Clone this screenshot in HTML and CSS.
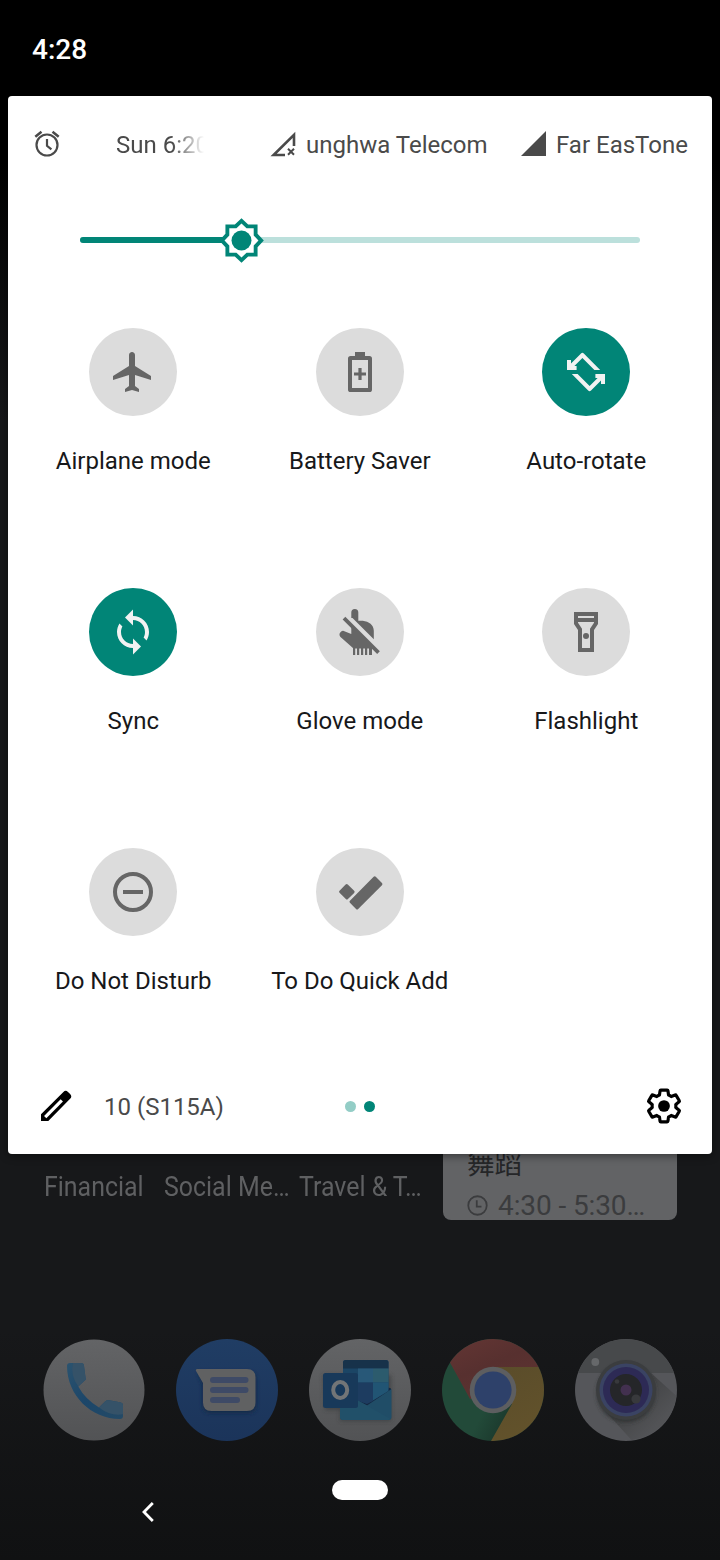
FILE: index.html
```html
<!DOCTYPE html>
<html lang="en">
<head>
<meta charset="utf-8">
<title>Quick settings</title>
<link rel="stylesheet" href="styles.css">
</head>
<body>
<div class="screen">
  <header class="statusbar">4:28</header>

  <main class="panel">
    <div class="info">
      <svg class="alarm" viewBox="0 0 26 28"><g fill="none" stroke="#4a4a4a"><circle cx="13" cy="15" r="10.5" stroke-width="2.2"/><path d="M13 9v6.8l4.4 3.6" stroke-width="2.2"/><path d="M1.3 6.8l6.2-5M18.5 1.8l6.2 5" stroke-width="2.5"/></g></svg>
      <span class="alarm-time">Sun 6:20</span>
      <svg class="signal" viewBox="0 0 26 26"><path d="M24 15V3.800L3.600 24H15" fill="none" stroke="#4a4a4a" stroke-width="2.600"/><path d="M18 17.700l6 6M24 17.700l-6 6" stroke="#4a4a4a" stroke-width="2"/></svg>
      <span class="carrier carrier-a">unghwa Telecom</span>
      <svg class="signal signal-b" viewBox="0 0 26 26"><path d="M25 0v25H0z" fill="#4a4a4a"/></svg>
      <span class="carrier carrier-b">Far EasTone</span>
    </div>

    <div class="brightness">
      <div class="track"><div class="fill"></div></div>
      <svg class="thumb" viewBox="0 0 24 24"><path fill="#018577" d="M20.2 8.6V3.8h-4.8L12 .6 8.6 3.8H3.8v4.8L.6 12l3.2 3.4v4.8h4.8l3.4 3.2 3.4-3.2h4.8v-4.8l3.2-3.4z"/><path transform="translate(2.88 2.88) scale(.76)" fill="#fff" d="M20.2 8.6V3.8h-4.8L12 .6 8.6 3.8H3.8v4.8L.6 12l3.2 3.4v4.8h4.8l3.4 3.2 3.4-3.2h4.8v-4.8l3.2-3.4z"/><circle cx="12" cy="12" r="5.1" fill="#018577"/></svg>
    </div>

    <div class="tiles">
      <div class="tile"><div class="disc"><svg viewBox="0 0 24 24"><path fill="currentColor" d="M21 16v-2l-8-5V3.5C13 2.67 12.33 2 11.5 2S10 2.67 10 3.5V9l-8 5v2l8-2.500V19l-2 1.500V22l3.500-1 3.500 1v-1.500L13 19v-5.500z"/></svg></div><span>Airplane mode</span></div>
      <div class="tile"><div class="disc"><svg viewBox="0 0 24 24"><path fill="currentColor" d="M9.5 2h5v3h-5zM9 12.2h2.200V10h1.600v2.200H15v1.600h-2.200V16h-1.600v-2.200H9z"/><rect x="7" y="5" width="10" height="16" rx=".3" fill="none" stroke="currentColor" stroke-width="2" stroke-linejoin="round"/></svg></div><span>Battery Saver</span></div>
      <div class="tile on"><div class="disc"><svg viewBox="0 0 24 24"><path fill="currentColor" d="M16.200 11l-6-6-4 4h1.100v2H2.500V6h2v1.700l5-5q.7-.7 1.400 0l8.200 8.300zM7.800 13l6 6 4-4h-1.100v-2h4.800v5h-2v-1.700l-5 5q-.7.7-1.400 0L4.900 13z"/></svg></div><span>Auto-rotate</span></div>
      <div class="tile on"><div class="disc"><svg viewBox="0 0 24 24"><path fill="currentColor" d="M12 4V.7L8 4.7l4 4V6c3.31 0 6 2.69 6 6 0 1.01-.25 1.97-.7 2.8l1.46 1.46C19.54 15.03 20 13.57 20 12c0-4.42-3.58-8-8-8zm0 14c-3.31 0-6-2.69-6-6 0-1.01.25-1.97.7-2.8L5.24 7.74C4.46 8.97 4 10.43 4 12c0 4.42 3.58 8 8 8v3.3l4-4-4-4z"/></svg></div><span>Sync</span></div>
      <div class="tile"><div class="disc"><svg class="full" viewBox="0 0 88 88"><path fill="currentColor" d="M35.3 24.500a3.500 3.500 0 0 1 7 0v8.200h4.500c6 .8 11 4 11 10v8.500L36.500 30h-1.200zM35.3 37L56 57.500V60.500H37.500L24.500 49c-2-2.400-.7-5.500 2.600-6.200l8.200 3.300z"/><path fill="currentColor" d="M37 60h2.200v7H37zM41 60h2.200v7H41zM45 60h2.200v7H45zM49 60h2.200v7H49zM53 60h3v7h-3z"/><path stroke="#dcdcdc" stroke-width="3" d="M30.500 27.200l33 34"/><path stroke="currentColor" stroke-width="3.800" d="M28 30.200l34.500 34.500"/></svg></div><span>Glove mode</span></div>
      <div class="tile"><div class="disc"><svg viewBox="0 0 24 24"><path fill="currentColor" fill-rule="evenodd" d="M6 2h12v6l-2 3v11H8V11L6 8zM8 4v1h8V4zM8 7v.4l2 3V20h4v-9.600l2-3V7z"/><circle cx="12" cy="14" r="1.5" fill="currentColor"/></svg></div><span>Flashlight</span></div>
      <div class="tile"><div class="disc"><svg viewBox="0 0 24 24"><circle cx="12" cy="12" r="9" fill="none" stroke="currentColor" stroke-width="2"/><path fill="currentColor" d="M7 11h10v2H7z"/></svg></div><span>Do Not Disturb</span></div>
      <div class="tile"><div class="disc"><svg class="full" viewBox="0 0 88 88"><g fill="currentColor" stroke="currentColor" stroke-width="3" stroke-linejoin="round"><path d="M30.700 37.500l6.400 6.400-6.200 6.100-6.300-6.300zM58.700 29.900l6.200 6.200L41.100 59.900 35 53.700z"/></g></svg></div><span>To Do Quick Add</span></div>
    </div>

    <footer class="panel-foot">
      <svg class="edit" viewBox="0 0 32 32"><path d="M1 31v-6.800L23.400 2a3.200 3.200 0 0 1 4.600 0l2.100 2.100a3.200 3.200 0 0 1 0 4.600L8.300 31z"/><path d="M5.200 27.100L21.800 10.400" stroke="#fff" stroke-width="3.200"/></svg>
      <span class="build">10 (S115A)</span>
      <span class="dots"><i></i><i class="current"></i></span>
      <svg class="gear" viewBox="0 0 24 24"><path fill="none" stroke="#000" stroke-width="2" stroke-linejoin="round" d="M19.43 12.98c.04-.32.07-.64.07-.98s-.03-.66-.07-.98l2.11-1.65c.19-.15.24-.42.12-.64l-2-3.46c-.12-.22-.39-.3-.61-.22l-2.49 1c-.52-.4-1.08-.73-1.69-.98l-.38-2.65C14.46 2.18 14.25 2 14 2h-4c-.25 0-.46.18-.49.42l-.38 2.65c-.61.25-1.17.59-1.69.98l-2.49-1c-.23-.09-.49 0-.61.22l-2 3.46c-.13.22-.07.49.12.64l2.11 1.65c-.04.32-.07.65-.07.98s.03.66.07.98l-2.11 1.65c-.19.15-.24.42-.12.64l2 3.46c.12.22.39.3.61.22l2.49-1c.52.4 1.08.73 1.69.98l.38 2.65c.03.24.24.42.49.42h4c.25 0 .46-.18.49-.42l.38-2.65c.61-.25 1.17-.59 1.69-.98l2.49 1c.23.09.49 0 .61-.22l2-3.46c.12-.22.07-.49-.12-.64z"/><circle cx="12" cy="12" r="3.700"/></svg>
    </footer>
  </main>

  <section class="home">
    <div class="folders"><span>Financial</span><span>Social Me…</span><span>Travel &amp; T…</span></div>
    <div class="event">
      <div class="event-title">舞蹈</div>
      <div class="event-time"><svg viewBox="0 0 20 20"><g fill="none" stroke="#3b3c3e" stroke-width="1.700"><circle cx="10" cy="10" r="8.800"/><path d="M9.300 5v6h4.500"/></g></svg><span>4:30 - 5:30…</span></div>
    </div>
  </section>

  <nav class="dock">
    <svg viewBox="0 0 102 102">
      <defs>
        <linearGradient id="plate" x2="0" y2="1"><stop stop-color="#636466"/><stop offset="1" stop-color="#525355"/></linearGradient>
        <linearGradient id="phone" x2="1" y2="1"><stop stop-color="#2b536f"/><stop offset=".5" stop-color="#1c4669"/><stop offset="1" stop-color="#244a66"/></linearGradient>
      </defs>
      <circle cx="51" cy="51" r="50.5" fill="url(#plate)"/>
      <path fill="url(#phone)" d="M24 27q0-3 3-3h11q3 0 3 3l1.800 13.500-7.500 7Q42 60 56 68.500l6-6q1.500-1.500 4-1.200l11 2q3 .5 3 3V77q0 3-3 3C48 80 24 56 24 27z"/>
      <path fill="#355268" d="M30 24h8q3 0 3 3l1.800 13.500-7.500 7Q27 36 30 24zM56 68.500l6-6q1.500-1.500 4-1.200l11 2q3 .5 3 3v9q-13 2-24-6.800z"/>
    </svg>
    <svg viewBox="0 0 102 102">
      <defs><linearGradient id="msg" x2="0" y2="1"><stop stop-color="#203d64"/><stop offset="1" stop-color="#1b345a"/></linearGradient><filter id="soft" x="-20%" y="-20%" width="140%" height="150%"><feGaussianBlur stdDeviation="2"/></filter></defs>
      <circle cx="51" cy="51" r="51" fill="url(#msg)"/>
      <path fill="#182b47" filter="url(#soft)" d="M22 33h50q8 0 8 8v25q0 8-8 8H35q-8 0-8-8V46z"/>
      <path fill="#606162" d="M21.500 30H71q8.500 0 8.500 8.500V63.500q0 8.500-8.500 8.500H35.500q-8.500 0-8.500-8.500V44l-7-12q-.8-2 1.500-2z"/>
      <path stroke="#3e4a66" stroke-width="6" stroke-linecap="round" d="M37 41h32.500M37 51h32.500M37 61h24"/>
    </svg>
    <svg viewBox="0 0 102 102">
      <circle cx="51" cy="51" r="51" fill="url(#plate)"/>
      <path fill="#333639" filter="url(#soft)" opacity=".6" d="M14 36h68v46H31V71H16z"/>
      <path d="M34 23.500q0-2.500 2.500-2.500h40.500q2.500 0 2.500 2.500V58H34z" fill="#1b4565"/>
      <path d="M34 29.500v-6q0-2.500 2.500-2.500h40.500q2.500 0 2.500 2.500v6z" fill="#17324a"/>
      <path d="M49 29.500h15v14H49z" fill="#285878"/><path d="M64 29.500h15.500v14H64z" fill="#2c5b6d"/>
      <path d="M79.500 48.500l2.500 1V53L58 67l-9-5 9-4 21-7z" fill="#152943"/>
      <path d="M49 43.500h15V62l-6 3-9-3z" fill="#1d3c60"/><path d="M64 43.500h15.500V52L64 61.500z" fill="#215574"/>
      <path d="M31 60h15l12 6.500L82.500 50v28q0 3-3 3H34q-3 0-3-3z" fill="#204d67"/>
      <path d="M46 60l12 6.500 23.500 13.500q-1 1-3 1H34q-3 0-3-3V62z" fill="#215069"/>
      <rect x="14" y="34" width="35" height="35" rx="2.500" fill="#18395a"/>
      <ellipse cx="31.200" cy="51" rx="7" ry="8" fill="none" stroke="#727577" stroke-width="4"/>
    </svg>
    <svg viewBox="0 0 102 102">
      <defs><clipPath id="round"><circle cx="51" cy="51" r="51"/></clipPath>
      <linearGradient id="cr" x2=".7" y2="1"><stop stop-color="#643634"/><stop offset=".5" stop-color="#57302f"/><stop offset="1" stop-color="#5e3331"/></linearGradient>
      <linearGradient id="cy" x2=".4" y2="1"><stop stop-color="#5a4c2a"/><stop offset="1" stop-color="#62522b"/></linearGradient>
      <linearGradient id="cg" gradientUnits="userSpaceOnUse" x1="40" y1="75" x2="61" y2="86"><stop stop-color="#224a39"/><stop offset="1" stop-color="#1c3b2e"/></linearGradient></defs>
      <g clip-path="url(#round)">
        <path fill="url(#cg)" d="M0 0h102v102H0z"/>
        <path fill="url(#cy)" d="M102 28H51v23l19 14-21 37h53z"/>
        <path fill="url(#cr)" d="M0 9L8.500 24.500 28 60l23-9V28h51V0H0z"/>
      </g>
      <circle cx="51" cy="51" r="23.300" fill="#5d5e60"/><circle cx="51" cy="51" r="18.600" fill="#2e416a"/>
    </svg>
    <svg viewBox="0 0 102 102">
      <defs><linearGradient id="cast" gradientUnits="userSpaceOnUse" x1="60" y1="60" x2="84" y2="84"><stop stop-color="#444547"/><stop offset="1" stop-color="#525356"/></linearGradient></defs>
      <circle cx="51" cy="51" r="51" fill="#55565a"/>
      <path fill="#47494b" d="M3 34a51 51 0 0 1 96 0z"/>
      <path fill="url(#cast)" d="M76 34l25.500 23a51 51 0 0 1-45 44L30 72z"/>
      <circle cx="51" cy="54" r="29" fill="#2f3032" filter="url(#soft)"/>
      <circle cx="51" cy="51" r="30" fill="#3b3d3f"/>
      <circle cx="51" cy="51" r="26.500" fill="#3a4363"/>
      <circle cx="51" cy="51" r="23" fill="#2d2a55"/>
      <circle cx="51" cy="51" r="16" fill="#252629"/>
      <circle cx="51" cy="51" r="5.500" fill="#42304f"/>
      <circle cx="61" cy="60" r="4.600" fill="#38393c"/><circle cx="42" cy="42.500" r="2.300" fill="#38393c"/>
      <circle cx="20.300" cy="23" r="3.900" fill="#66686a"/>
    </svg>
  </nav>

  <div class="navbar">
    <svg class="back" viewBox="0 0 14 22"><path d="M11.800 2L3 11l8.800 9" fill="none" stroke="#fff" stroke-width="2.800"/></svg>
    <span class="pill"></span>
  </div>
</div>
</body>
</html>
```
FILE: styles.css
```css
* { box-sizing: border-box; }
body { margin: 0; background: #000; }
svg { display: block; flex: none; }

.screen {
  width: 720px;
  height: 1560px;
  overflow: hidden;
  display: flex;
  flex-direction: column;
  font-family: Roboto, "Liberation Sans", "Noto Sans CJK TC", sans-serif;
  background: linear-gradient(#000 0, #000 150px, #17181a 420px, #17181a 1330px, #101112 1560px);
}

.statusbar {
  height: 96px;
  padding: 0 32px;
  line-height: 100px;
  font-size: 28px;
  font-weight: 500;
  color: #fff;
}

.panel {
  position: relative;
  z-index: 1;
  height: 1058px;
  margin: 0 8px;
  border-radius: 4px;
  background: #fff;
  box-shadow: 0 2px 8px rgba(0, 0, 0, .45);
}

.info {
  display: flex;
  align-items: center;
  height: 96px;
  padding: 2px 0 0 26px;
  font-size: 24px;
  line-height: 28px;
  color: #4a4a4a;
  white-space: nowrap;
}
.alarm { width: 26px; height: 28px; margin-top: -2px; }
.alarm-time {
  width: 92px;
  margin-left: 56px;
  -webkit-mask-image: linear-gradient(90deg, #000 56px, transparent 88px);
  mask-image: linear-gradient(90deg, #000 56px, transparent 88px);
}
.signal { width: 26px; height: 26px; margin: -3px 10px 0 62px; }
.carrier-a { width: 182px; }
.signal-b { margin: -3px 9px 0 33px; }

.brightness { position: relative; height: 96px; padding: 45px 72px; }
.track { height: 6px; border-radius: 3px; background: #bce0dc; }
.fill { width: 162px; height: 6px; border-radius: 3px; background: #018577; }
.thumb { position: absolute; left: 210px; top: 24.5px; width: 47px; height: 47px; }

.tiles {
  display: grid;
  grid-template-columns: repeat(3, 1fr);
  grid-template-rows: 260px 260px 220px;
  padding: 40px 12.5px 0 12px;
}
.tile {
  display: flex;
  flex-direction: column;
  align-items: center;
  gap: 31px;
  font-size: 24px;
  line-height: 28px;
  color: #17181a;
  white-space: nowrap;
}
.disc {
  display: grid;
  place-items: center;
  width: 88px;
  height: 88px;
  border-radius: 50%;
  background: #dcdcdc;
  color: #666;
}
.disc svg { width: 48px; height: 48px; }
.disc .full { width: 88px; height: 88px; }
.on .disc { background: #018577; color: #f2f2f2; }

.panel-foot { display: flex; align-items: center; height: 76px; padding-left: 32px; }
.edit { width: 32px; height: 32px; }
.build {
  width: 240px;
  margin: 2px 0 0 32px;
  font-size: 24px;
  line-height: 28px;
  color: #4a4a4a;
}
.dots { display: flex; gap: 8px; width: 300px; margin-left: 1px; }
.dots i { width: 11px; height: 11px; border-radius: 50%; background: #93cdc6; }
.dots .current { background: #018577; }
.gear { width: 38px; height: 38px; }

.home { display: flex; height: 185px; padding-left: 44px; }
.folders { display: flex; width: 398.5px; padding-top: 16px; }
.folders span {
  width: 120px;
  font-size: 28px;
  line-height: 33px;
  color: #5f6062;
  white-space: nowrap;
  transform: scaleX(.89);
  transform-origin: 0 0;
}
.folders span + span { width: 135px; }
.event {
  width: 234px;
  height: 66px;
  padding-left: 24.5px;
  overflow: hidden;
  border-radius: 0 0 8px 8px;
  background: #626365;
}
.event-title { margin-top: -9px; font-size: 27.5px; line-height: 40px; color: #252628; }
.event-time {
  display: flex;
  align-items: center;
  gap: 10px;
  margin-top: 4px;
  font-size: 28px;
  letter-spacing: -.1px;
  line-height: 33px;
  color: #3b3c3e;
  white-space: nowrap;
}
.event-time svg { width: 21px; height: 21px; }

.dock { display: flex; gap: 31px; padding: 0 43px; height: 141px; }
.dock svg { width: 102px; height: 102px; }

.navbar { display: flex; height: 80px; }
.back { width: 14px; height: 22px; margin: 21px 0 0 141px; }
.pill { width: 56px; height: 20px; margin-left: 177px; border-radius: 10px; background: #fff; }
```
